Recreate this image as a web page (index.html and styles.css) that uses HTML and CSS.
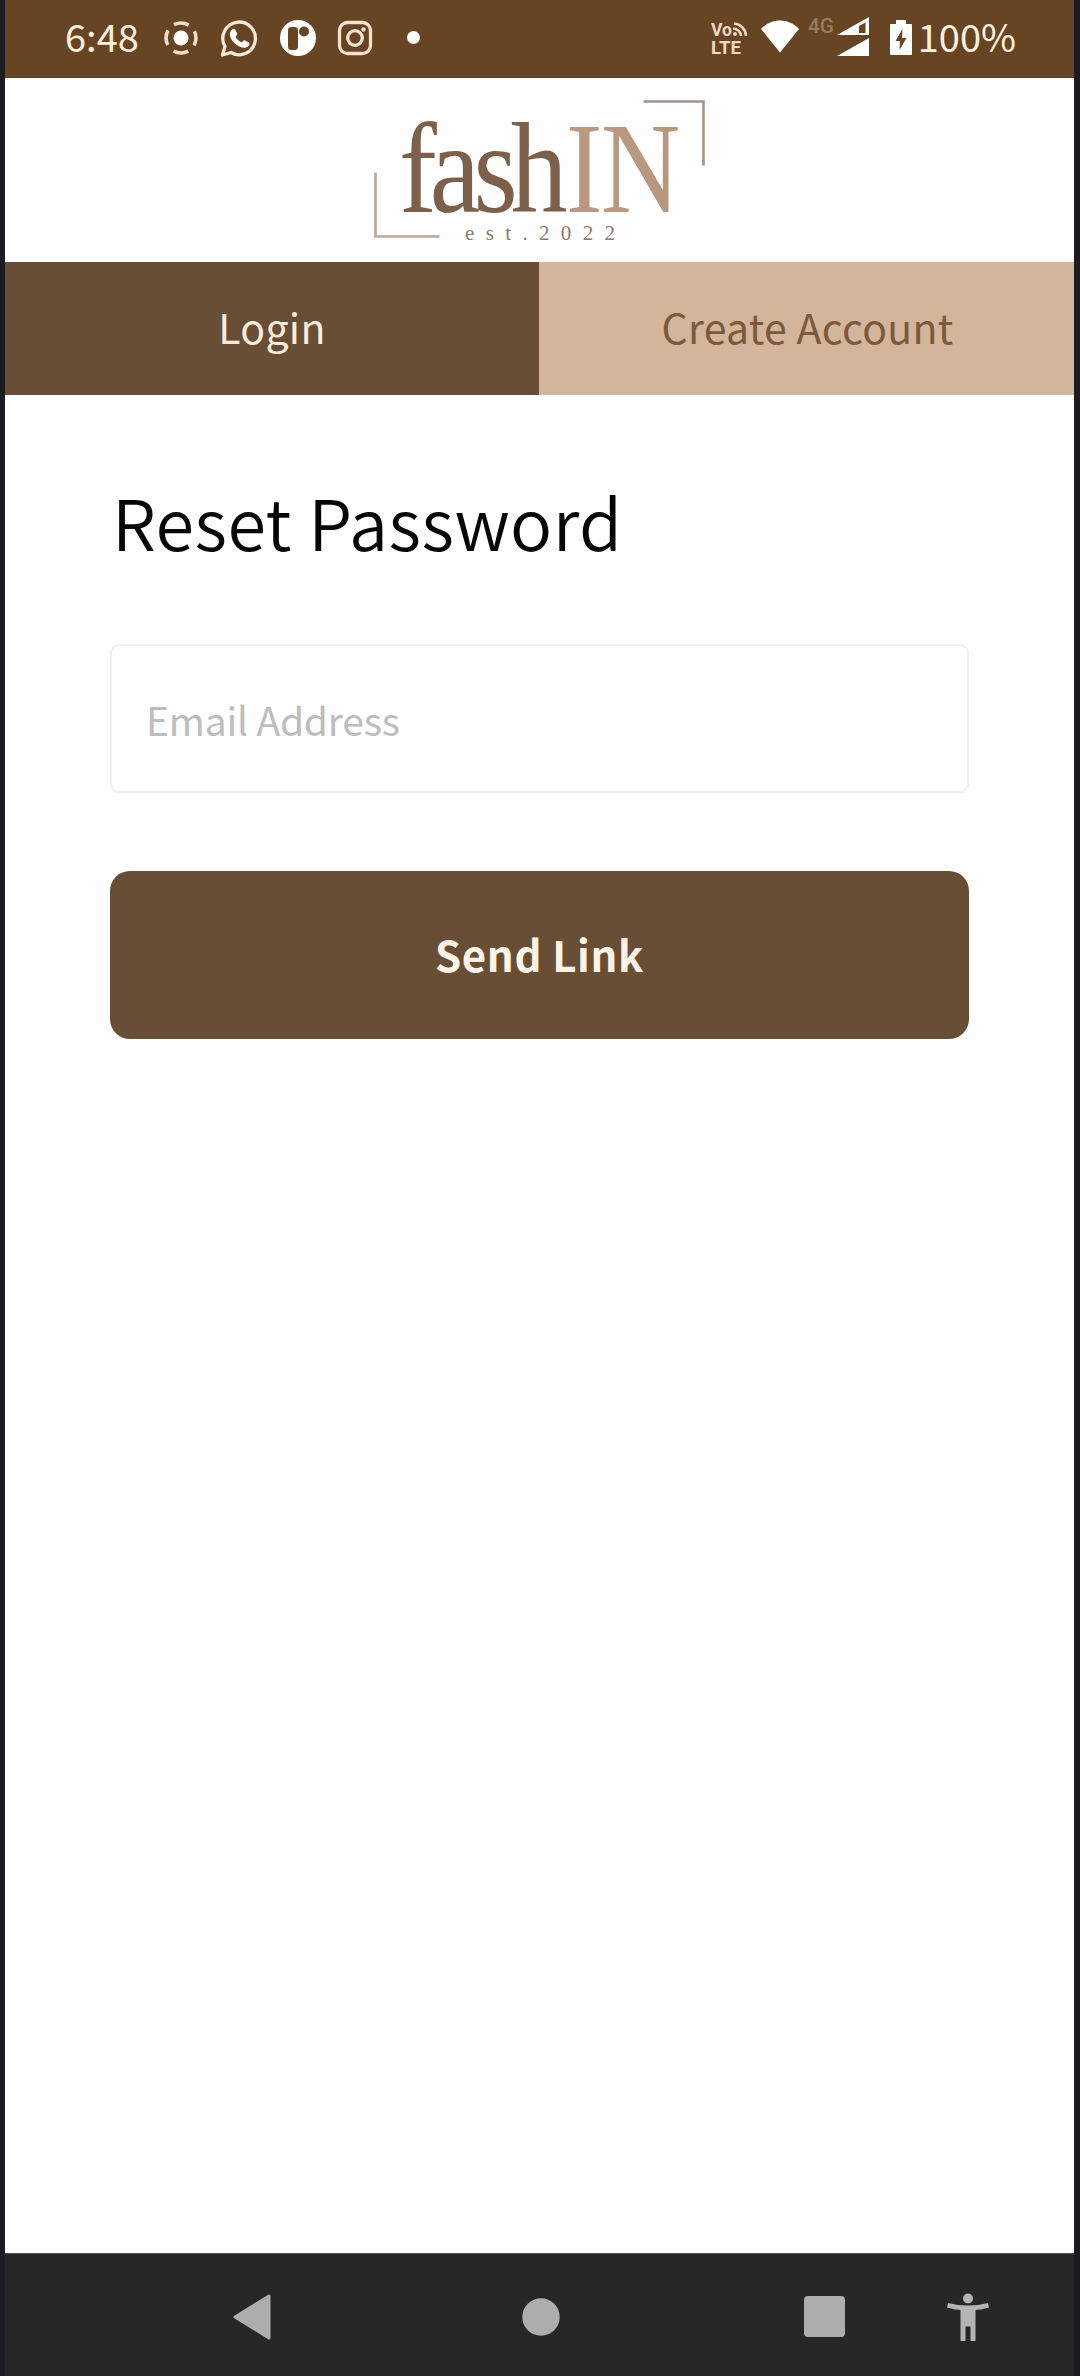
FILE: index.html
```html
<!DOCTYPE html>
<html lang="en">
<head>
<meta charset="utf-8">
<title>Reset Password</title>
<link rel="stylesheet" href="styles.css">
</head>
<body>
<div class="phone">
  <header class="status">
    <div class="status-left">
      <span class="clock">6:48</span>
      <svg class="icon" width="36" height="40" viewBox="0 0 36 40"><circle cx="18" cy="20" r="7.500" fill="#fff"/><circle cx="18" cy="20" r="15" fill="none" stroke="#f6dfca" stroke-width="3.600" stroke-dasharray="15.200 8.360" stroke-dashoffset="7.600"/></svg>
      <svg class="icon" width="40" height="40" viewBox="0 0 40 40"><path d="M3.500 37 6 28.500A16.300 16.300 0 1 1 12 34.500Z" fill="none" stroke="#fbe8d8" stroke-width="3.300" stroke-linejoin="round"/><path d="M13 11.500c1-1 2.800-1 3.300 0l1.800 4c.3 1-.2 1.700-1.500 3.200 1.500 2.800 3.500 4.500 6.300 5.700 1.500-1.800 2-2.500 3-2l4 2c1 .6.500 2.500-.5 3.600-2 2-5 2.300-8.400.8-5-2.200-9-6.500-10-11-.5-2.500.4-4.800 2-6.300z" fill="#fff"/></svg>
      <svg class="icon" width="38" height="40" viewBox="0 0 38 40"><circle cx="19" cy="20" r="18" fill="#fff"/><rect x="9" y="9" width="10" height="23" rx="3.500" fill="#684522"/><circle cx="25" cy="13.500" r="5" fill="#684522"/></svg>
      <svg class="icon" width="36" height="40" viewBox="0 0 36 40"><rect x="2.500" y="4.500" width="31" height="31" rx="8" fill="none" stroke="#f8e2cf" stroke-width="3.300"/><circle cx="18" cy="20" r="7.300" fill="none" stroke="#f8e2cf" stroke-width="3.300"/><circle cx="26.500" cy="11.500" r="2.200" fill="#f8e2cf"/></svg>
      <span class="dot"></span>
    </div>
    <div class="status-right">
      <svg class="icon" width="40" height="40" viewBox="0 0 40 40"><text class="volte" x="1" y="17.500" textLength="21" lengthAdjust="spacingAndGlyphs">Vo</text><text class="volte" x="1" y="35.500" textLength="30" lengthAdjust="spacingAndGlyphs">LTE</text><g fill="none" stroke="#f0d9c5" stroke-width="2.600"><path d="M24 5.500A13 13 0 0 1 36 18"/><path d="M23 10.500A8 8 0 0 1 31 18"/></g><circle cx="25" cy="16" r="2" fill="#f0d9c5"/></svg>
      <svg class="icon wifi" width="40" height="40" viewBox="0 0 40 40"><path d="M1 11C11-.5 29-.5 39 11L20 34.500Z" fill="#fff"/></svg>
      <svg class="icon signal" width="64" height="50" viewBox="0 -4 64 50"><text class="net" x="1" y="16" textLength="26" lengthAdjust="spacingAndGlyphs">4G</text><path fill-rule="evenodd" d="M30 18 62 0V18ZM52 9V16H58.500V5.500Z" fill="#fff"/><path d="M30 39 62 21V39Z" fill="#fff"/></svg>
      <svg class="icon battery" width="24" height="40" viewBox="0 0 24 40"><path d="M2 6h5V2h10v4h5q1 0 1 1v29q0 1-1 1H2q-1 0-1-1V7q0-1 1-1z" fill="#fff"/><path d="M13.500 11 6.500 23H11L10.500 32 17.500 20H13Z" fill="#684522"/></svg>
      <span class="percent">100%</span>
    </div>
  </header>

  <div class="brand">
    <svg width="336" height="150" viewBox="370 94 336 150" role="img" aria-label="fashIN est. 2022">
      <defs>
        <linearGradient id="tan" x1="0" x2="1"><stop offset="0" stop-color="#bd9885"/><stop offset="1" stop-color="#b6987b"/></linearGradient>
      </defs>
      <path d="M643.500 101.500H703.500V165.500" fill="none" stroke="#a3958c" stroke-width="2.600"/>
      <path d="M375.500 172.500V236.500H439.500" fill="none" stroke="#bda896" stroke-width="2.600"/>
      <text class="logo" transform="scale(.88 1)" x="453.400 488.500 538 580.500" y="212" fill="#7d604a">fash</text>
      <text class="logo" transform="scale(.85 1)" x="666 707" y="212" fill="url(#tan)">IN</text>
      <text class="est" x="465" y="240" textLength="150">est.2022</text>
    </svg>
  </div>

  <nav class="tabs">
    <a class="tab tab-active"><span>Login</span></a>
    <a class="tab"><span>Create Account</span></a>
  </nav>

  <main class="content">
    <h1 class="title">Reset Password</h1>
    <div class="field"><span>Email Address</span></div>
    <button class="send" type="button"><span>Send Link</span></button>
  </main>

  <footer class="navbar">
    <svg class="back" width="40" height="48" viewBox="0 0 40 48"><path d="M3 24 37 3V45Z" fill="#adadad" stroke="#adadad" stroke-width="3" stroke-linejoin="round"/></svg>
    <svg class="home" width="38" height="38" viewBox="0 0 38 38"><circle cx="19" cy="19" r="18.700" fill="#adadad"/></svg>
    <span class="recent"></span>
    <svg class="access" width="42" height="48" viewBox="0 0 42 48"><circle cx="21" cy="5.500" r="5" fill="#b4b4b4"/><path d="M1 10Q21 15 41 10L42 14.500Q35 16.500 28.500 17V48H23.500V33.500H18.500V48H13.500V17Q7 16.500 0 14.500Z" fill="#b4b4b4"/></svg>
  </footer>
</div>
</body>
</html>
```
FILE: styles.css
```css
* { box-sizing: border-box; }

body {
  margin: 0;
  background: #1c1b1f;
  font-family: "Noto Sans CJK SC", "Noto Sans", sans-serif;
}

.phone {
  display: flex;
  flex-direction: column;
  width: 1069px;
  height: 2376px;
  margin-left: 5px;
  background: #fefefe;
}

.status {
  display: flex;
  justify-content: space-between;
  height: 78px;
  padding: 0 60px 2px 60px;
  background: #684522;
  border-bottom: 1px solid #62401c;
}

.status-left, .status-right { display: flex; align-items: center; }

.icon { flex: none; }

.clock, .percent {
  padding-bottom: 4px;
  color: #fff0e2;
  font-size: 38px;
  line-height: 52px;
}

.clock { width: 97px; margin-right: -19px; }
.status-left { gap: 20px; }
.dot { width: 13px; height: 13px; margin-left: 14px; border-radius: 50%; background: #fff; }
.wifi { margin-left: 10px; }
.signal { margin-left: 7px; }
.battery { margin-left: 18px; }
.percent { margin-left: 5px; margin-right: -2px; }

.volte { font: 700 19px Roboto, sans-serif; fill: #f0d9c5; }
.net { font: 500 20px Roboto, sans-serif; fill: #967c61; }

.brand {
  display: flex;
  justify-content: center;
  height: 184px;
  padding: 16px 3px 0 0;
}

.logo { font-family: "Liberation Serif", serif; font-size: 129px; }
.est { font-family: "Liberation Serif", serif; font-size: 21px; fill: #8c7a6d; }

.tabs { display: grid; grid-template-columns: 534px 1fr; height: 133px; }

.tab {
  display: flex;
  align-items: center;
  justify-content: center;
  padding: 0 0 5px 2px;
  background: #d3b59b;
  color: #7a5a3a;
  font-size: 41px;
  line-height: 60px;
  letter-spacing: 0.3px;
}

.tab-active { padding-left: 0; background: #684e34; color: #fdebdc; }

.content {
  display: flex;
  flex: 1;
  flex-direction: column;
  padding: 76px 105px 0 105px;
}

.title {
  margin: 0 0 73px 2px;
  font-size: 70px;
  font-weight: 350;
  line-height: 100px;
  letter-spacing: 0.5px;
  color: #050505;
  white-space: nowrap;
}

.field {
  display: flex;
  align-items: center;
  height: 149px;
  padding: 1px 0 0 34px;
  border: 2px solid #f0f0f0;
  border-radius: 9px;
  color: #bdbdbd;
  font-size: 39px;
  letter-spacing: -0.2px;
}

.send {
  height: 168px;
  margin-top: 78px;
  padding: 0 0 3px;
  border: 0;
  border-radius: 20px;
  background: #684e34;
  color: #fff3e8;
  font: 700 42px "Noto Sans CJK SC", sans-serif;
  letter-spacing: 0.6px;
}

.navbar {
  display: flex;
  align-items: center;
  height: 123px;
  padding: 3px 0 0 227px;
  background: #272727;
  border-top: 1px solid #555;
}

.home { margin-left: 250px; }
.recent { width: 41px; height: 41px; margin-left: 244px; border-radius: 4px; background: #adadad; }
.access { margin-left: 102px; }
```
